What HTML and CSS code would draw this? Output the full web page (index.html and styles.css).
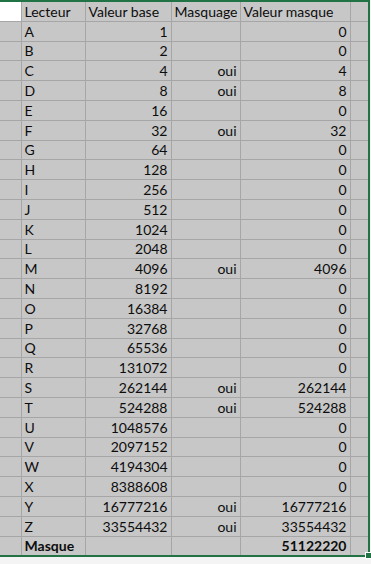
FILE: index.html
```html
<!DOCTYPE html>
<html lang="fr">
<head>
<meta charset="utf-8">
<title>Masque lecteurs</title>
<link rel="stylesheet" href="styles.css">
</head>
<body>
<div class="sheet">
  <table class="grid">
    <colgroup>
      <col class="c-gutter"><col class="c-lecteur"><col class="c-base"><col class="c-masq"><col class="c-val"><col class="c-extra">
    </colgroup>
    <tbody>
      <tr class="head"><td class="blank"></td><td>Lecteur</td><td>Valeur base</td><td>Masquage</td><td>Valeur masque</td><td></td></tr>
      <tr><td></td><td>A</td><td class="num">1</td><td class="num"></td><td class="num">0</td><td></td></tr>
      <tr><td></td><td>B</td><td class="num">2</td><td class="num"></td><td class="num">0</td><td></td></tr>
      <tr><td></td><td>C</td><td class="num">4</td><td class="num">oui</td><td class="num">4</td><td></td></tr>
      <tr><td></td><td>D</td><td class="num">8</td><td class="num">oui</td><td class="num">8</td><td></td></tr>
      <tr><td></td><td>E</td><td class="num">16</td><td class="num"></td><td class="num">0</td><td></td></tr>
      <tr><td></td><td>F</td><td class="num">32</td><td class="num">oui</td><td class="num">32</td><td></td></tr>
      <tr><td></td><td>G</td><td class="num">64</td><td class="num"></td><td class="num">0</td><td></td></tr>
      <tr><td></td><td>H</td><td class="num">128</td><td class="num"></td><td class="num">0</td><td></td></tr>
      <tr><td></td><td>I</td><td class="num">256</td><td class="num"></td><td class="num">0</td><td></td></tr>
      <tr><td></td><td>J</td><td class="num">512</td><td class="num"></td><td class="num">0</td><td></td></tr>
      <tr><td></td><td>K</td><td class="num">1024</td><td class="num"></td><td class="num">0</td><td></td></tr>
      <tr><td></td><td>L</td><td class="num">2048</td><td class="num"></td><td class="num">0</td><td></td></tr>
      <tr><td></td><td>M</td><td class="num">4096</td><td class="num">oui</td><td class="num">4096</td><td></td></tr>
      <tr><td></td><td>N</td><td class="num">8192</td><td class="num"></td><td class="num">0</td><td></td></tr>
      <tr><td></td><td>O</td><td class="num">16384</td><td class="num"></td><td class="num">0</td><td></td></tr>
      <tr><td></td><td>P</td><td class="num">32768</td><td class="num"></td><td class="num">0</td><td></td></tr>
      <tr><td></td><td>Q</td><td class="num">65536</td><td class="num"></td><td class="num">0</td><td></td></tr>
      <tr><td></td><td>R</td><td class="num">131072</td><td class="num"></td><td class="num">0</td><td></td></tr>
      <tr><td></td><td>S</td><td class="num">262144</td><td class="num">oui</td><td class="num">262144</td><td></td></tr>
      <tr><td></td><td>T</td><td class="num">524288</td><td class="num">oui</td><td class="num">524288</td><td></td></tr>
      <tr><td></td><td>U</td><td class="num">1048576</td><td class="num"></td><td class="num">0</td><td></td></tr>
      <tr><td></td><td>V</td><td class="num">2097152</td><td class="num"></td><td class="num">0</td><td></td></tr>
      <tr><td></td><td>W</td><td class="num">4194304</td><td class="num"></td><td class="num">0</td><td></td></tr>
      <tr><td></td><td>X</td><td class="num">8388608</td><td class="num"></td><td class="num">0</td><td></td></tr>
      <tr><td></td><td>Y</td><td class="num">16777216</td><td class="num">oui</td><td class="num">16777216</td><td></td></tr>
      <tr><td></td><td>Z</td><td class="num">33554432</td><td class="num">oui</td><td class="num">33554432</td><td></td></tr>
      <tr class="total"><td></td><td>Masque</td><td class="num"></td><td class="num"></td><td class="num">51122220</td><td></td></tr>
    </tbody>
  </table>
  <span class="handle"></span>
</div>
</body>
</html>
```

FILE: styles.css
```css
html, body {
  margin: 0;
  padding: 0;
  background: #f4f4f4;
}

body {
  width: 371px;
  height: 564px;
  overflow: hidden;
  font-family: Lato, "Open Sans", sans-serif;
  font-size: 14px;
  color: #0d0d0d;
}

/* selected range outline, Excel green */
.sheet {
  position: relative;
  box-sizing: border-box;
  width: 370px;
  border-top: 2px solid #217346;
  border-right: 2px solid #217346;
  border-bottom: 2px solid #217346;
}

.grid {
  border-collapse: collapse;
  table-layout: fixed;
  width: 368px;
  background: #c7c7c7;
}

.c-gutter { width: 21px; }
.c-lecteur { width: 64px; }
.c-base { width: 86px; }
.c-masq { width: 69px; }
.c-val { width: 110px; }
.c-extra { width: 18px; }

.grid td {
  height: 18.8px;
  padding: 0 3px;
  border: 1px solid #a6a6a6;
  white-space: nowrap;
  overflow: hidden;
  line-height: 18px;
  vertical-align: bottom;
}

.grid tr:first-child td { border-top: none; }
.grid tr:last-child td { border-bottom: none; }
.grid td:first-child { border-left: none; }
.grid td:last-child { border-right: none; }

.grid .blank { background: #ffffff; }

.grid .num { text-align: right; }

.total td { font-weight: bold; }

/* fill handle at the bottom-right corner of the range */
.handle {
  position: absolute;
  right: -4px;
  bottom: -4px;
  width: 5px;
  height: 5px;
  background: #217346;
  border: 1px solid #ffffff;
}
```
